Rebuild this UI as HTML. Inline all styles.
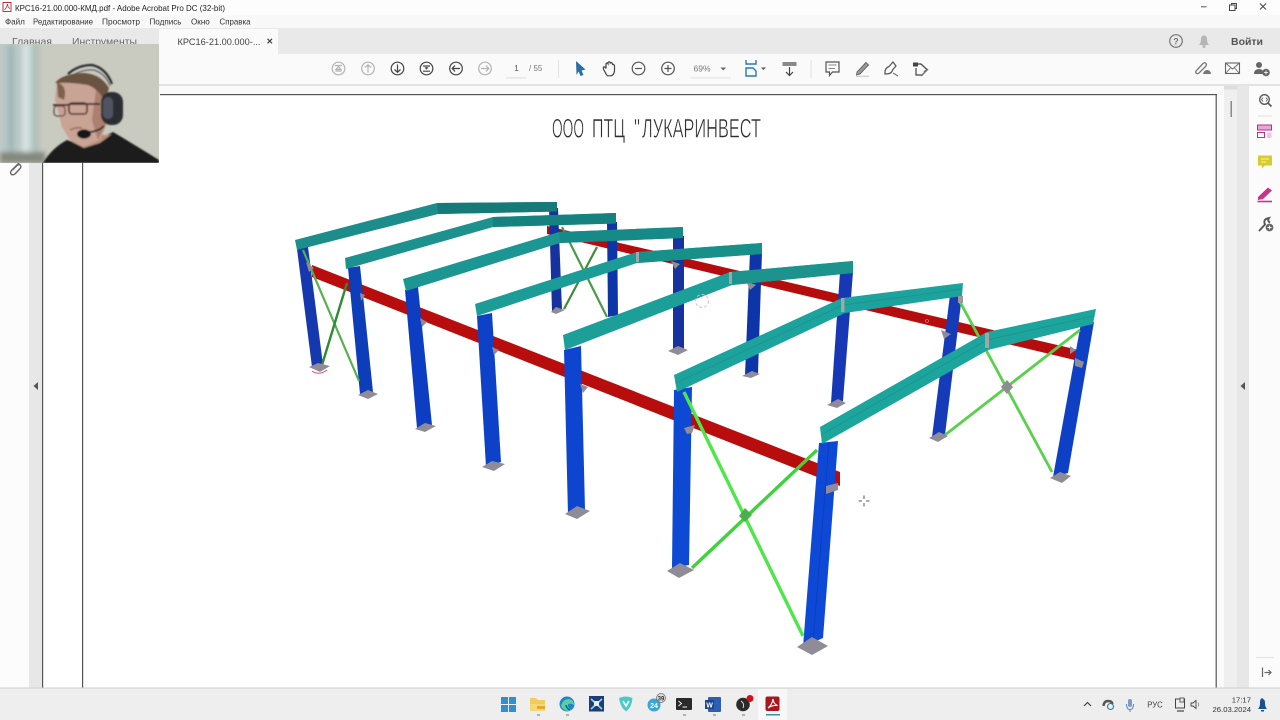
<!DOCTYPE html>
<html lang="ru"><head><meta charset="utf-8"><title>Acrobat</title>
<style>
html,body{margin:0;padding:0;background:#fff;width:1280px;height:720px;overflow:hidden}
svg{position:absolute;left:0;top:0;display:block}
#root{filter:blur(.3px)}
text{font-family:"Liberation Sans",sans-serif}
</style></head><body>
<svg id="root" width="1280" height="720" viewBox="0 0 1280 720" xmlns="http://www.w3.org/2000/svg">
<defs>
<filter id="b1"><feGaussianBlur stdDeviation="0.9"/></filter>
<filter id="b2"><feGaussianBlur stdDeviation="2.5"/></filter>
<filter id="b0"><feGaussianBlur stdDeviation="0.3"/></filter>
</defs>
<!-- chrome -->
<rect width="1280" height="720" fill="#fff"/>
<rect y="0" width="1280" height="15" fill="#fdfdfd"/>
<rect y="15" width="1280" height="13" fill="#f8f8f8"/>
<rect y="28" width="1280" height="26" fill="#e9e9e9"/>
<rect x="159" y="29" width="119" height="25" fill="#fafafa"/>
<rect y="54" width="1280" height="31" fill="#fafafa"/>
<rect y="84" width="1280" height="2" fill="#e3e3e3"/>
<rect y="86" width="1280" height="8" fill="#fafafa"/>
<!-- left pane -->
<rect x="0" y="94" width="29" height="594" fill="#fcfcfc"/>
<rect x="29" y="94" width="13" height="594" fill="#e7e7e7"/>
<rect x="42" y="94" width="1175" height="594" fill="#fff"/>
<rect x="42" y="94" width="1.2" height="594" fill="#555"/>
<rect x="82" y="94" width="1.2" height="594" fill="#555"/>
<rect x="160" y="94" width="1057" height="1.2" fill="#555"/>
<rect x="1215.6" y="94" width="1.2" height="594" fill="#555"/>
<!-- right side -->
<rect x="1217" y="86" width="7" height="602" fill="#fafafa"/>
<rect x="1224" y="86" width="13" height="602" fill="#efefef"/>
<rect x="1237" y="86" width="12" height="602" fill="#e7e7e7"/>
<rect x="1249" y="86" width="31" height="602" fill="#fbfbfb"/>
<rect x="1224" y="86" width="13" height="3.5" fill="#dcdcdc"/>
<rect x="1230.5" y="101" width="1.5" height="16" fill="#8a8a8a"/>
<polygon points="38,382 38,390 33.5,386" fill="#555"/>
<polygon points="1245,382 1245,390 1240.5,386" fill="#555"/>
<!-- taskbar -->
<rect y="688" width="1280" height="32" fill="#eeeeee"/>
<rect y="687.5" width="1280" height="1" fill="#cfcfcf"/>

<!-- title -->
<rect x="3" y="2.5" width="8" height="9" fill="#fff" stroke="#b8383c" stroke-width="1"/>
<path d="M4.5 10 Q7 7 7.5 4 Q8 8 10 8.5" fill="none" stroke="#b8383c" stroke-width=".8"/>
<text x="15" y="11" font-size="8.7" fill="#222" textLength="210" lengthAdjust="spacingAndGlyphs">КРС16-21.00.000-КМД.pdf - Adobe Acrobat Pro DC (32-bit)</text>
<g font-size="8.1" fill="#333">
<text x="5" y="24.5">Файл</text><text x="33" y="24.5" textLength="60" lengthAdjust="spacingAndGlyphs">Редактирование</text><text x="102" y="24.5" textLength="38" lengthAdjust="spacingAndGlyphs">Просмотр</text><text x="149.5" y="24.5" textLength="32" lengthAdjust="spacingAndGlyphs">Подпись</text><text x="191" y="24.5">Окно</text><text x="219.5" y="24.5" textLength="31" lengthAdjust="spacingAndGlyphs">Справка</text>
</g>
<text x="12" y="45" font-size="10.5" fill="#666">Главная</text>
<text x="72" y="45" font-size="10.5" fill="#666" textLength="65" lengthAdjust="spacingAndGlyphs">Инструменты</text>
<text x="177.5" y="45" font-size="9.3" fill="#444" textLength="83" lengthAdjust="spacingAndGlyphs">КРС16-21.00.000-...</text>
<path d="M267.5 38.8 L272 43.3 M272 38.8 L267.5 43.3" stroke="#444" stroke-width="1.2"/>
<!-- window controls -->
<path d="M1201 6.8H1206.5" stroke="#555" stroke-width="1"/>
<rect x="1229.5" y="5" width="5.5" height="5.5" fill="#fdfdfd" stroke="#444" stroke-width="1"/>
<path d="M1231.5 5V3.5H1236.5V8.5H1235" fill="none" stroke="#444" stroke-width=".9"/>
<path d="M1260 3.5L1266 9.5M1266 3.5L1260 9.5" stroke="#444" stroke-width="1"/>
<!-- top-right tab icons -->
<circle cx="1176" cy="41" r="6.3" fill="none" stroke="#777" stroke-width="1.2"/>
<text x="1176" y="44.5" font-size="9" font-weight="bold" fill="#777" text-anchor="middle">?</text>
<path d="M1199 45Q1201 43 1201 39Q1201 35.5 1204 35.5Q1207 35.5 1207 39Q1207 43 1209 45Z" fill="#b5b5b5"/><circle cx="1204" cy="46.5" r="1.5" fill="#b5b5b5"/>
<text x="1231" y="45" font-size="10.5" font-weight="bold" fill="#555" textLength="32" lengthAdjust="spacingAndGlyphs">Войти</text>

<!-- toolbar -->
<g fill="none" stroke-width="1.2">
<g stroke="#b3b3b3">
<circle cx="338.5" cy="68.5" r="6.3"/><path d="M335 65.5H342M335.5 71H341.5M338.5 66.5L336 69.5H341Z"/>
<circle cx="368" cy="68.5" r="6.3"/><path d="M368 72.5V65M365 67.5L368 64.8L371 67.5"/>
<circle cx="485" cy="68.5" r="6.3"/><path d="M481 68.5H488.5M486 65.5L488.8 68.5L486 71.5"/>
</g>
<g stroke="#444">
<circle cx="397.5" cy="68.5" r="6.3"/><path d="M397.5 64.5V72M394.5 69.5L397.5 72.3L400.5 69.5"/>
<circle cx="426.5" cy="68.5" r="6.3"/><path d="M423 66H430M423 71.2H430"/><path d="M424.5 67.2H428.5L426.5 69.8Z" fill="#444" stroke="none"/>
<circle cx="456" cy="68.5" r="6.3"/><path d="M460 68.5H452.5M455 65.5L452.2 68.5L455 71.5"/>
</g>
<g stroke="#555">
<circle cx="638.5" cy="68.5" r="6.3"/><path d="M635 68.5H642"/>
<circle cx="668" cy="68.5" r="6.3"/><path d="M664.5 68.5H671.5M668 65V72"/>
</g>
</g>
<text x="516.5" y="71" font-size="8" fill="#555" text-anchor="middle">1</text>
<rect x="506" y="77.5" width="20" height=".8" fill="#d5d5d5"/>
<text x="529" y="71" font-size="8" fill="#777">/ 55</text>
<rect x="558" y="60" width="1" height="18" fill="#e3e3e3"/>
<path d="M576 61L585.5 69.5L581.5 70.5L583.5 75L580.5 76L578.6 71.5L576.5 75Z" fill="#2a6ea6"/>
<path d="M605 72Q602.5 68 603.5 67Q605 66.5 606 68.5V63.8Q607 62.2 608 63.8V62.5Q609.3 61 610.3 62.5V63Q611.5 62 612.5 63.5V64.5Q613.7 64 614.5 65.5V71Q614 75 611 75.8H607.5Q606 74.5 605 72Z" fill="none" stroke="#444" stroke-width="1.2"/>
<text x="702" y="71.5" font-size="8.5" fill="#777" text-anchor="middle">69%</text>
<path d="M720.5 67.5H726L723.2 70.5Z" fill="#666"/>
<rect x="691" y="77.5" width="40" height=".8" fill="#dcdcdc"/>
<path d="M746 60V64H756V60M746 76V68H753L756 71V76Z" fill="none" stroke="#2b78b6" stroke-width="1.4"/>
<path d="M761 67.5H766L763.5 70Z" fill="#555"/>
<rect x="782.5" y="62" width="14" height="4" fill="#888"/>
<path d="M789.5 67V75M786 72L789.5 75.5L793 72" fill="none" stroke="#444" stroke-width="1.2"/>
<rect x="810.5" y="60" width="1" height="18" fill="#e3e3e3"/>
<path d="M826 62H839V72H832.5L829.5 75.5V72H826Z" fill="none" stroke="#555" stroke-width="1.2"/>
<path d="M828.5 65H836.5M828.5 68.5H835" stroke="#888" stroke-width="1"/>
<path d="M857 72L866 62.5L868.5 65L860 74L856.5 75Z" fill="#999" stroke="#555" stroke-width=".8"/><path d="M856 76.3H869" stroke="#ccc" stroke-width="1.2"/>
<path d="M885 74Q884.5 68 889 66.5L893 62L896 66L892.5 70Q892 74 885 74Z" fill="none" stroke="#555" stroke-width="1.2"/><path d="M893 73L898 76" stroke="#777" stroke-width="1.2"/>
<path d="M914 64H921L927 69.5L924 72M916 68V75H923" fill="none" stroke="#444" stroke-width="1.2"/><rect x="913" y="62.5" width="5" height="4" fill="#444"/><path d="M921 76L928 69" stroke="#777" stroke-width="1.5"/>
<!-- right toolbar -->
<g fill="none" stroke="#777" stroke-width="1.3"><path d="M1197 70L1203 63.5Q1205 62 1206 63.5Q1207 65 1205.5 66.5L1199 73Q1197 74.5 1196 73Q1195 71.5 1197 70Z"/></g>
<path d="M1203 74Q1204 70 1207 70Q1210.5 70 1211 74Z" fill="#777"/>
<rect x="1225.5" y="63" width="14" height="10.5" fill="none" stroke="#666" stroke-width="1.1"/><path d="M1225.5 63L1232.5 69L1239.5 63M1225.5 73.5L1230.5 68M1239.5 73.5L1234.5 68" fill="none" stroke="#666" stroke-width=".9"/>
<circle cx="1259" cy="65" r="3" fill="#666"/><path d="M1254 74Q1254 69 1259 69Q1263 69 1263 72V74Z" fill="#666"/><circle cx="1266" cy="72.5" r="3.8" fill="#666"/><path d="M1264 72.5H1268M1266 70.5V74.5" stroke="#fff" stroke-width=".8"/>

<!-- right pane icons -->
<circle cx="1264.5" cy="99.5" r="4.8" fill="none" stroke="#555" stroke-width="1.3"/><path d="M1268 103L1271.5 106.5" stroke="#555" stroke-width="1.6"/><path d="M1263 97.5L1261.5 99.5L1263 101.5M1266 97.5L1267.5 99.5L1266 101.5" fill="none" stroke="#555" stroke-width=".8"/>
<rect x="1258" y="115.5" width="14" height="1" fill="#e2e2e2"/>
<rect x="1257.5" y="125" width="14" height="5" fill="#e6a8d6" stroke="#b6337f" stroke-width="1"/>
<rect x="1257.5" y="132.5" width="7" height="5" fill="none" stroke="#b6337f" stroke-width="1"/><rect x="1267" y="132.5" width="4.5" height="5.5" fill="#edc5e2"/>
<path d="M1258 155.5H1272V165.5H1265L1262 168.5V165.5H1258Z" fill="#d6cb2f"/><path d="M1261 159H1269M1261 162H1266" stroke="#f7f2b5" stroke-width="1"/>
<path d="M1258 197L1268 187.5L1272 190.5L1263 199L1258 200Z" fill="#c9338e"/><path d="M1257.5 201.5H1272" stroke="#c9338e" stroke-width="1.6"/>
<path d="M1259 231L1265 224.5Q1263 220 1267 218.5L1269 218Q1267 221 1270 222.5" fill="none" stroke="#555" stroke-width="1.9"/><circle cx="1269.5" cy="227.5" r="3.9" fill="#666"/><path d="M1267.5 227.5H1271.5M1269.5 225.5V229.5" stroke="#fff" stroke-width=".9"/>
<rect x="1256" y="657" width="18" height="1" fill="#e2e2e2"/>
<path d="M1262.5 667.5V677M1264.5 672.5H1271M1268.5 670L1271 672.5L1268.5 675" fill="none" stroke="#666" stroke-width="1.2"/>

<!-- attachment -->
<path d="M19 163L11.5 170.5Q9.5 173 11.5 174.5Q13.5 175.5 15.5 173.5L20.5 168Q21.5 166 20 164.8Q18.5 164 17 165.5L12.5 170" fill="none" stroke="#666" stroke-width="1.4"/>

<!-- document heading -->
<g font-size="27" fill="#2e2e2e" stroke="#fff" stroke-width=".55">
<text x="552" y="137.5" textLength="32" lengthAdjust="spacingAndGlyphs">ООО</text>
<text x="592" y="137.5" textLength="33" lengthAdjust="spacingAndGlyphs">ПТЦ</text>
<text x="634" y="137.5" textLength="6" lengthAdjust="spacingAndGlyphs">"</text>
<text x="642" y="137.5" textLength="119" lengthAdjust="spacingAndGlyphs">ЛУКАРИНВЕСТ</text>
</g>

<!-- 3D frame -->
<g filter="url(#b0)">
<!-- back red beam -->
<polygon points="547,226 1083,351 1083,362 547,234" fill="#b50d10"/>
<!-- back right columns -->
<polygon points="549,208 558,208 562,310 552,311" fill="#12309e"/>
<polygon points="607,222 617,222 618,315 608,317" fill="#1134a8"/>
<polygon points="673,236 684,236 684,350 673,352" fill="#12309e"/>
<polygon points="750,252 762,252 758,373 745,375" fill="#1134a8"/>
<polygon points="840,272 853,272 843,401 831,403" fill="#1238b4"/>
<polygon points="950,295 962,295 945,435 932,437" fill="#123ab8"/>
<polygon points="1081,323 1094,322 1068,473 1053,477" fill="#1040c4"/>
<!-- back braces -->
<path d="M562 227L607 317" stroke="#4a9a48" stroke-width="2.2" fill="none"/>
<path d="M597 247L564 309" stroke="#3c8c3c" stroke-width="2.2" fill="none"/>
<!-- right bay braces -->
<path d="M959 300L1052 472" stroke="#5ad04c" stroke-width="2.8" fill="none"/>
<path d="M945 435L1080 330" stroke="#5ad04c" stroke-width="2.8" fill="none"/>
<polygon points="1007,380 1013,387 1007,394 1001,387" fill="#8d8d92"/>
<!-- front red beam -->
<polygon points="312,265 840,472 840,486 312,277" fill="#b8090e"/>
<!-- left columns -->
<polygon points="297,249 308,247 323,365 312,367" fill="#1238ae"/>
<polygon points="348,268 360,266 373,392 360,394" fill="#103cb8"/>
<polygon points="405,290 418,287 432,425 417,428" fill="#0f3ec2"/>
<polygon points="477,316 492,313 501,462 486,467" fill="#0e42c8"/>
<polygon points="564,350 581,346 585,510 568,515" fill="#0e44d0"/>
<!-- left bay braces -->
<path d="M303 250L359 381" stroke="#55b050" stroke-width="2.2" fill="none"/>
<path d="M322 365L347 283" stroke="#2f8a34" stroke-width="2.4" fill="none"/>
<!-- brackets -->
<g fill="#8f8c97">
<polygon points="360,293 365,295 361,301"/>
<polygon points="420,318 427,322 422,327"/>
<polygon points="492,347 499,350 494,355"/>
<polygon points="580,384 588,387 583,393"/>
<polygon points="306,262 314,268 309,272"/>
<polygon points="671,261 680,264 675,269"/>
<polygon points="746,281 756,285 750,290"/>
<polygon points="941,330 951,334 944,339"/>
<polygon points="1070,346 1076,350 1070,354"/>
</g>
<!-- base plates -->
<g fill="#8f8c97">
<polygon points="309,367 318,363 330,366 320,372"/>
<polygon points="358,395 368,390 378,394 368,399"/>
<polygon points="415,429 425,423 436,426 425,432"/>
<polygon points="482,467 492,461 505,464 494,471"/>
<polygon points="565,514 577,506 590,511 577,519"/>
<polygon points="551,312 556,307 565,310 556,314"/>
<polygon points="668,351 678,346 688,350 678,355"/>
<polygon points="742,376 752,371 760,374 751,378"/>
<polygon points="827,405 838,399 846,403 837,408"/>
<polygon points="929,438 939,432 948,436 938,442"/>
<polygon points="1050,478 1060,472 1071,476 1062,483"/>
</g>
<!-- rafters -->
<polygon points="295,240 437,203 557,202 557,211.5 438,214 297,250" fill="#1a8d8b"/>
<polygon points="437,203 557,202 557,211.5 438,214" fill="#127a79"/>
<polygon points="345,258 493,217 616,213 616,223.5 493,227 346,269" fill="#1b918d"/>
<polygon points="493,217 616,213 616,223.5 493,227" fill="#158280"/>
<polygon points="403,279 559,232 683,227 683,238 560,243 406,291" fill="#1c9692"/>
<polygon points="559,232 683,227 683,238 560,243" fill="#178a86"/>
<polygon points="475,304 637,252 762,243 762,254 637,263 477,316" fill="#1d9c97"/>
<polygon points="637,252 762,243 762,254 638,263" fill="#189089"/>
<polygon points="563,335 730,272 853,261 853,273 732,285 565,350" fill="#1e9f99"/>
<polygon points="730,272 853,261 853,273 732,285" fill="#1a938d"/>
<!-- front frame columns -->
<polygon points="674,390 692,387 689,565 672,568" fill="#0d48d2"/>
<polygon points="819,443 838,441 823,638 803,647" fill="#0d48d6"/>
<path d="M829 442L813 643" stroke="#0d3eb8" stroke-width="1" fill="none"/>
<!-- front rafters -->
<polygon points="674,375 842,298 963,283 962,296 845,313 677,392" fill="#1fa39d"/>
<path d="M676 383L843 305L962 289" stroke="#1b958f" stroke-width="1" fill="none"/>
<polygon points="820,427 987,332 1096,309 1093,324 988,350 822,444" fill="#1fa59d"/>
<path d="M821 435L987 340L1094 316" stroke="#1b958f" stroke-width="1" fill="none"/>
<rect x="841" y="298" width="3.5" height="14" fill="#a2a6a8"/>
<rect x="985" y="333" width="4" height="15" fill="#a2a6a8"/>
<rect x="729" y="272" width="3" height="12" fill="#a2a6a8"/>
<rect x="636" y="252" width="3" height="10" fill="#a2a6a8"/>
<rect x="958" y="296" width="5" height="7" fill="#9a9a9a"/>
<!-- front braces -->
<path d="M684 392L803 636" stroke="#4fe64a" stroke-width="3.4" fill="none"/>
<path d="M692 568L817 450" stroke="#3fd23e" stroke-width="3.4" fill="none"/>
<polygon points="745,508 752,515 745,522 739,516" fill="#4cb04a"/>
<!-- front bases -->
<g fill="#8f8c97">
<polygon points="667,571 680,563 694,570 679,578"/>
<polygon points="797,647 812,637 828,646 812,655"/>
<polygon points="826,486 838,483 838,490 826,494"/>
<polygon points="1075,358 1084,362 1082,368 1075,366"/>
<polygon points="684,428 695,425 692,433 687,434"/>
</g>
<!-- small marks -->
<circle cx="702" cy="301" r="6.5" fill="none" stroke="#e3b6d6" stroke-width="1" stroke-dasharray="3 2"/>
<path d="M312 371Q319 376 327 370" fill="none" stroke="#d05060" stroke-width="1"/>
<circle cx="927" cy="321" r="1.5" fill="none" stroke="#e88" stroke-width=".6"/>
</g>
<path d="M864 495.5V499M864 503V506.5M858.5 501H862M866 501H869.5" stroke="#556" stroke-width="1"/>

<!-- webcam -->
<svg x="0" y="44" width="159" height="119" viewBox="0 44 159 119">
<rect x="0" y="44" width="159" height="119" fill="#c9cac0"/>
<g filter="url(#b2)">
<rect x="0" y="44" width="39" height="119" fill="#b8c8c7"/>
<rect x="22" y="44" width="8" height="119" fill="#d6e2df"/>
<rect x="8" y="44" width="6" height="119" fill="#a2b6b8"/>
<rect x="34" y="44" width="5" height="119" fill="#aebfb8"/>
<rect x="0" y="152" width="45" height="11" fill="#84887e"/>
</g>
<g filter="url(#b1)">
<!-- shirt -->
<path d="M43 163Q52 148 67 140L85 146L113 132Q135 145 159 160V163Z" fill="#1e1c1d"/>
<!-- neck -->
<path d="M78 135H108L112 134L100 143L84 148L72 142Z" fill="#b78d7c"/>
<!-- face -->
<path d="M57 80L55 100L62 127L70 140L83 147L100 140L110 117L103 87Z" fill="#c9a394"/>
<path d="M96 90L108 95L108 120L98 140L92 120Z" fill="#ac7f6e"/>
<!-- hair -->
<path d="M55 83Q62 74 82 73Q100 73 109 88L105 102Q100 90 88 85Q70 82 55 83Z" fill="#6b5340"/>
<path d="M57 82Q68 86 64 100L58 97Z" fill="#7b624e"/>
<!-- headband -->
<path d="M68 74Q78 65 92 65Q106 68 112 84" fill="none" stroke="#2a2a2e" stroke-width="2.2"/>
<path d="M72 76Q82 69 94 70Q106 74 110 86" fill="none" stroke="#4c4c50" stroke-width="1"/>
<!-- ear cup -->
<rect x="101" y="92" width="22" height="33" rx="10" fill="#2c2d33"/>
<rect x="103" y="97" width="10" height="22" rx="5" fill="#4f5362"/>
<!-- glasses -->
<path d="M53 105H67L70 104H100" fill="none" stroke="#3d2a28" stroke-width="1.7"/>
<rect x="69" y="103" width="18" height="11" rx="3" fill="none" stroke="#4a302c" stroke-width="1.6"/>
<rect x="54" y="106" width="11" height="10" rx="3" fill="none" stroke="#5a4440" stroke-width="1.2"/>
<!-- mouth -->
<path d="M70 130Q76 127 82 128" stroke="#97695a" stroke-width="1.4" fill="none"/>
<!-- mic -->
<path d="M88 132Q98 132 104 126" stroke="#222" stroke-width="1.6" fill="none"/>
<ellipse cx="84" cy="134" rx="7" ry="4.6" fill="#121212"/>
</g>
</svg>

<!-- taskbar icons -->
<g>
<g fill="#2e90cf"><rect x="501" y="697" width="7" height="7"/><rect x="509" y="697" width="7" height="7"/><rect x="501" y="705" width="7" height="7"/><rect x="509" y="705" width="7" height="7"/></g>
<path d="M530 698H536L538 700H545V711H530Z" fill="#f0cc5a"/><rect x="530" y="704" width="15" height="7" fill="#f5d873"/><rect x="537" y="706" width="8" height="3" fill="#e3a92e"/>
<rect x="537" y="714.5" width="3" height="1" fill="#777"/>
<circle cx="567" cy="704" r="7.5" fill="#1c87c9"/><path d="M561 706Q563 699 569 699Q574 700 574 705Q571 703 568 704Q567 708 572 710Q565 713 561 706Z" fill="#5ecf9a"/><path d="M566 705Q566 708 570 710" fill="none" stroke="#0d5da0" stroke-width="1.5"/>
<rect x="566" y="714.5" width="3" height="1" fill="#777"/>
<rect x="589" y="696" width="15" height="15.5" fill="#1b3f75"/><path d="M591 699L602 709M602 699L591 709" stroke="#9fd0ea" stroke-width="1.6"/><rect x="594" y="701" width="5" height="5" fill="#e2eef5"/>
<path d="M619 698Q626 695 632.5 698Q632 707 626 711.5Q620 707 619 698Z" fill="#4fc8c5"/><path d="M623 701L626 706L629 701" fill="none" stroke="#dff4f3" stroke-width="1.8"/>
<circle cx="654" cy="705" r="6.5" fill="#3aa7d4"/><text x="654" y="708" font-size="7" font-weight="bold" fill="#fff" text-anchor="middle">24</text>
<circle cx="661" cy="698" r="4.5" fill="#ddd" stroke="#666" stroke-width=".7"/><text x="661" y="700.5" font-size="6" font-weight="bold" fill="#333" text-anchor="middle">39</text>
<rect x="676" y="698" width="16" height="12" rx="1" fill="#2a2a2a"/><path d="M678.5 701L681.5 703.5L678.5 706" fill="none" stroke="#eee" stroke-width="1"/><path d="M682.5 707H687" stroke="#eee" stroke-width="1"/>
<rect x="683" y="714.5" width="3" height="1" fill="#777"/>
<rect x="708" y="697" width="13" height="15" rx="1" fill="#2c5fb0"/><rect x="705" y="700" width="9" height="9" fill="#1c4590"/><text x="709.5" y="707.5" font-size="7" font-weight="bold" fill="#fff" text-anchor="middle">W</text>
<rect x="713" y="714.5" width="3" height="1" fill="#777"/>
<circle cx="743" cy="704.5" r="6.8" fill="#2a2a2a"/><circle cx="750" cy="698.5" r="3.5" fill="#d40f1c"/><path d="M741 701Q745 704 743 708" stroke="#ddd" stroke-width="1" fill="none"/>
<rect x="742" y="714.5" width="3" height="1" fill="#777"/>
<rect x="758" y="689" width="29" height="31" fill="#f7f7f7"/>
<rect x="765.5" y="696.5" width="14" height="14.5" rx="2" fill="#a6181d"/><path d="M768 708Q772 705 773 699Q773.5 704 777.5 705.5Q772 705 768 708Z" fill="none" stroke="#fff" stroke-width="1.1"/>
<rect x="766" y="714" width="14" height="1.5" fill="#3f8ca5"/>
</g>
<!-- tray -->
<path d="M1084 706L1087.5 702.5L1091 706" fill="none" stroke="#444" stroke-width="1.2"/>
<path d="M1103.5 706Q1104 701 1108 701Q1112 701 1112.5 704" fill="none" stroke="#555" stroke-width="2.4"/><circle cx="1110.5" cy="706.5" r="3" fill="none" stroke="#2e7a9a" stroke-width="1.1"/>
<rect x="1128" y="699" width="4" height="8" rx="2" fill="#7d9cc9"/><path d="M1126.5 704Q1126.5 709.5 1130 709.5Q1133.5 709.5 1133.5 704M1130 709.5V712" fill="none" stroke="#5f86bd" stroke-width="1"/>
<text x="1155" y="707.5" font-size="7.8" fill="#444" text-anchor="middle">РУС</text>
<rect x="1175.5" y="699" width="9" height="9" fill="none" stroke="#444" stroke-width="1"/><rect x="1180" y="698" width="4" height="4" fill="#eee" stroke="#444" stroke-width=".8"/><path d="M1177 711H1184" stroke="#444" stroke-width="1.2"/>
<path d="M1191 703H1193L1196 700.5V708.5L1193 706H1191Z" fill="none" stroke="#444" stroke-width=".9"/><path d="M1198 702.5Q1199.5 704.5 1198 706.5" fill="none" stroke="#888" stroke-width=".8"/>
<text x="1251" y="702.5" font-size="7.7" fill="#333" text-anchor="end">17:17</text>
<text x="1251" y="712" font-size="7.7" fill="#333" text-anchor="end">26.03.2024</text>
<path d="M1258 709Q1260 707 1260 703Q1260 699 1261 699Q1261.5 698 1262 698Q1262.5 698 1263 699Q1265 699.5 1265 703Q1265 707 1267 709Z" fill="#15528e"/><rect x="1261" y="710" width="3" height="1.5" fill="#15528e"/>
</svg>
</body></html>
